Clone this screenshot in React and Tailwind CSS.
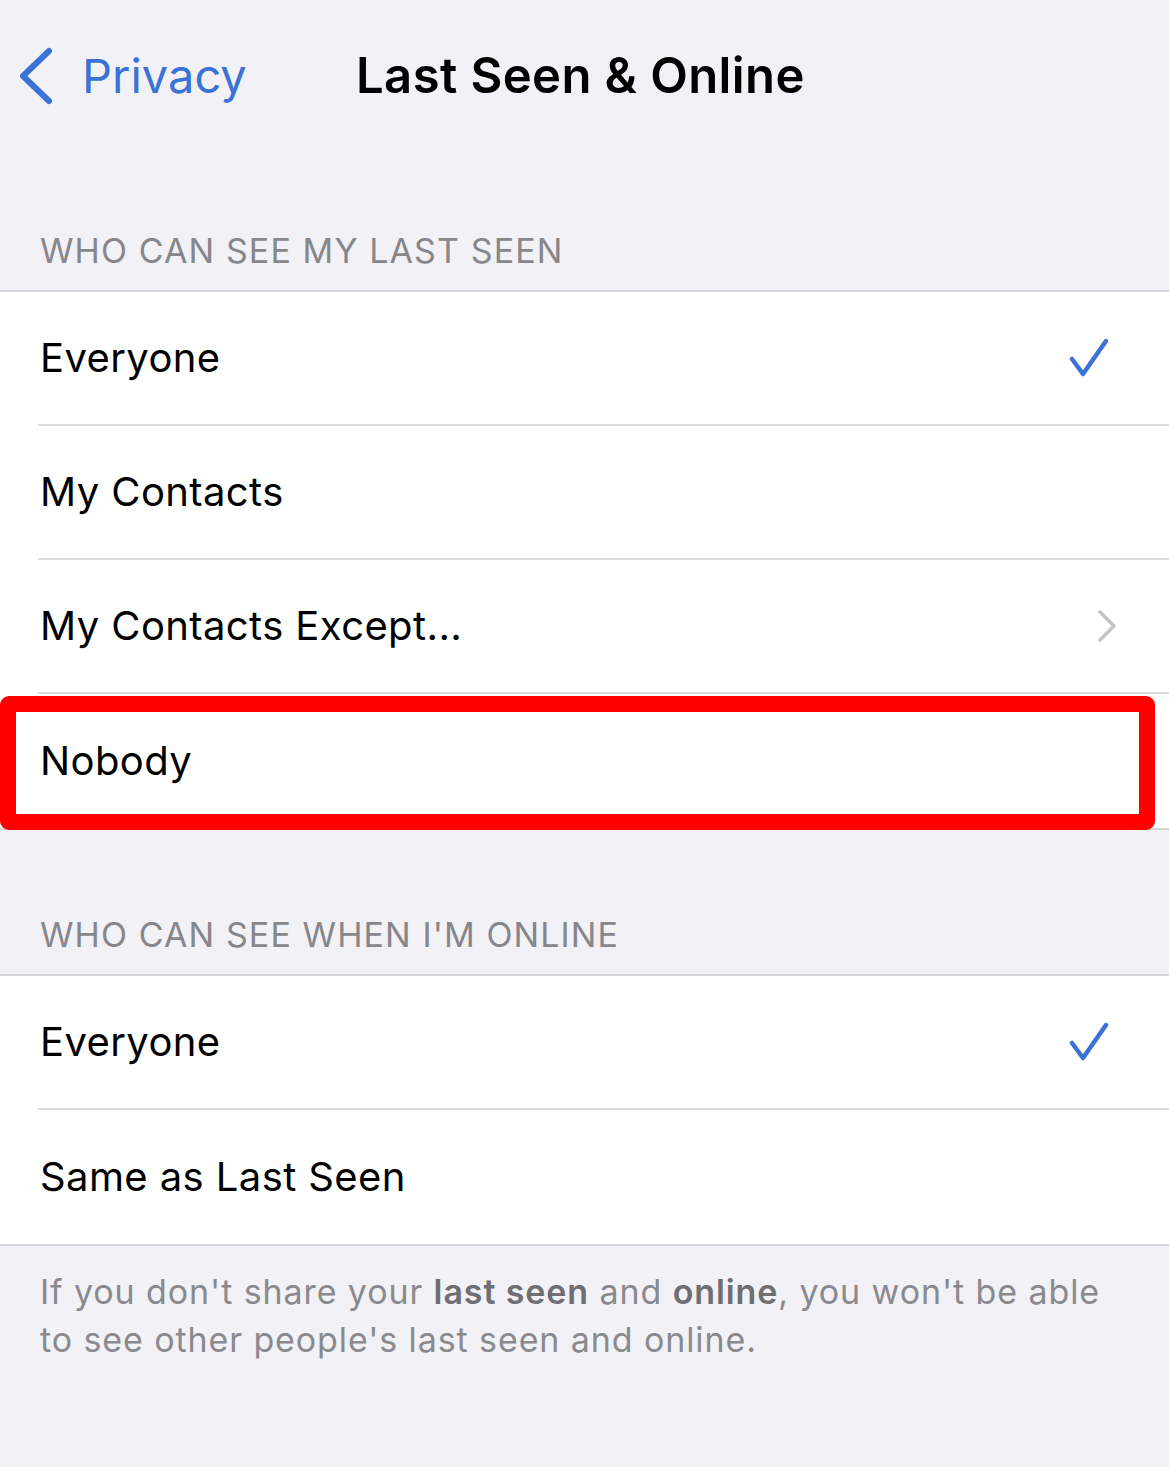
import React from "react";

const font = { fontFamily: "Inter, 'Noto Sans', sans-serif" };

const Check = () => (
  <svg width="40" height="40" viewBox="0 0 40 40" fill="none" className="text-[#3b72d6]">
    <path d="M3 21 L14 36 L37 3" stroke="currentColor" strokeWidth="4.5" strokeLinecap="round" strokeLinejoin="round" />
  </svg>
);

const Chevron = () => (
  <svg width="20" height="32" viewBox="0 0 20 32" fill="none" className="text-[#c4c4c7]">
    <path d="M3 2 L17 16 L3 30" stroke="currentColor" strokeWidth="3.5" strokeLinecap="round" strokeLinejoin="round" />
  </svg>
);

const Row = ({ label, right, last }) => (
  <div className="flex h-[134px] items-stretch pl-[38px]">
    <div className={`flex flex-1 items-center justify-between pr-[60px] ${last ? "" : "border-b-2 border-[#dcdce0]"}`}>
      <span className="pl-[2px] text-[40px] tracking-[0.4px] text-black">{label}</span>
      {right}
    </div>
  </div>
);

const SectionHeader = ({ children }) => (
  <div className="px-[40px] pb-[14px] text-[34px] tracking-[1.1px] text-[#86868b]">{children}</div>
);

export default function App() {
  return (
    <div className="relative min-h-[1467px] w-[1169px] bg-[#f1f1f6]" style={font}>
      {/* Nav bar */}
      <div className="relative flex h-[152px] items-center">
        <div className="flex items-center pl-[18px]">
          <svg width="36" height="58" viewBox="0 0 36 58" fill="none" className="text-[#3b72d6]">
            <path d="M31 4 L5 29 L31 54" stroke="currentColor" strokeWidth="6" strokeLinecap="round" strokeLinejoin="round" />
          </svg>
          <span className="ml-[28px] text-[47px] text-[#3b72d6]">Privacy</span>
        </div>
        <div className="absolute left-[356px] text-[49px] font-semibold tracking-[0.4px] text-black">Last Seen &amp; Online</div>
      </div>

      <div className="pt-[73px]">
        <SectionHeader>WHO CAN SEE MY LAST SEEN</SectionHeader>
        <div className="border-y-2 border-[#d6d6da] bg-white">
          <Row label="Everyone" right={<Check />} />
          <Row label="My Contacts" />
          <Row label="My Contacts Except..." right={<div className="mr-[-8px]"><Chevron /></div>} />
          <Row label="Nobody" last />
        </div>
      </div>

      <div className="pt-[79px]">
        <SectionHeader>WHO CAN SEE WHEN I'M ONLINE</SectionHeader>
        <div className="border-y-2 border-[#d6d6da] bg-white">
          <Row label="Everyone" right={<Check />} />
          <Row label="Same as Last Seen" last />
        </div>
      </div>

      <p className="px-[40px] pt-[22px] text-[34px] leading-[48px] tracking-[0.9px] text-[#8a8a8e]">
        If you don't share your <span className="font-semibold text-[#6e6e73]">last seen</span> and{" "}
        <span className="font-semibold text-[#6e6e73]">online</span>, you won't be able to see other people's last seen and online.
      </p>

      {/* Highlight overlay */}
      <div className="pointer-events-none absolute left-0 top-[696px] h-[134px] w-[1155px] rounded-[9px] border-[16px] border-[#ff0000]" />
    </div>
  );
}
